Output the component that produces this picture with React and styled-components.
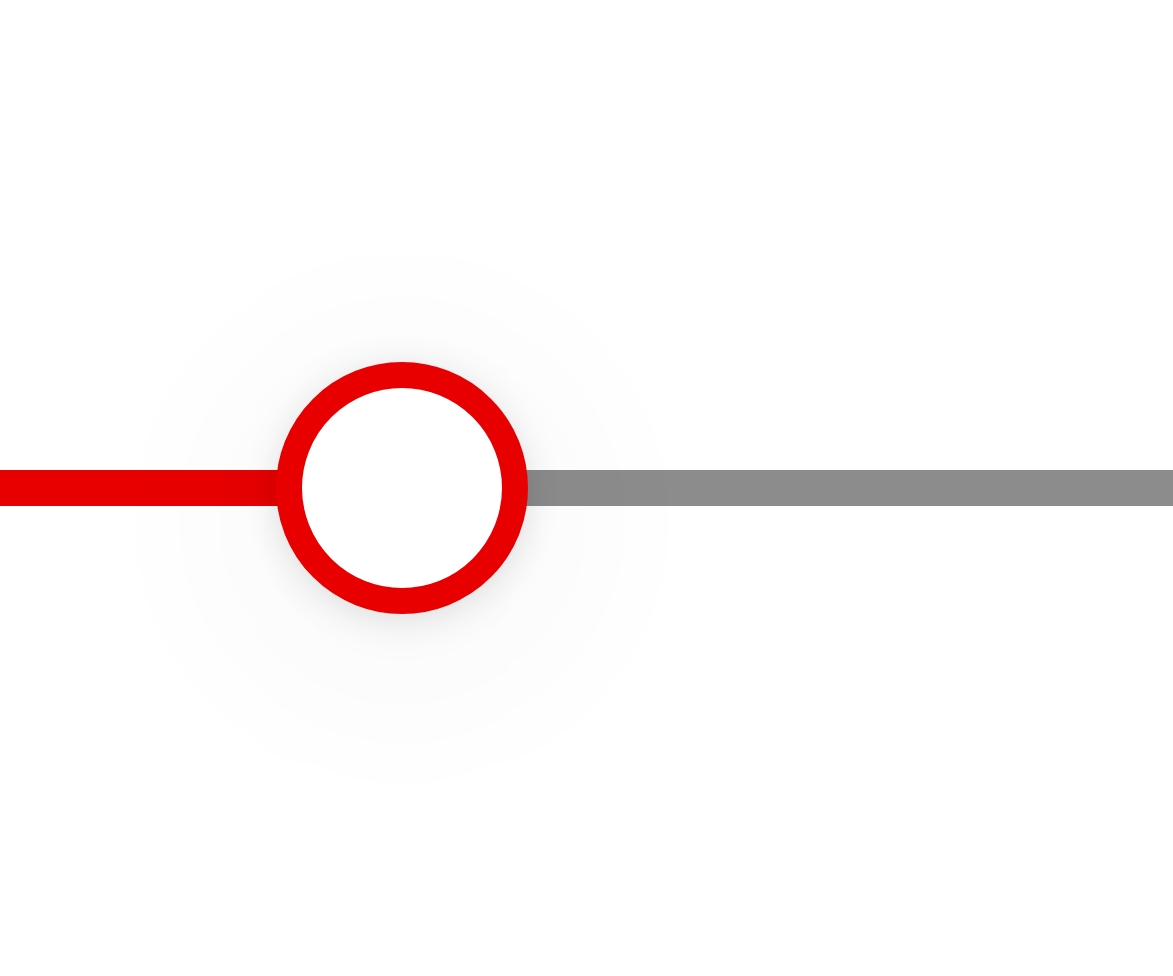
import React from 'react';
import styled, { createGlobalStyle } from 'styled-components';

const GlobalStyle = createGlobalStyle`
  html, body {
    margin: 0;
    padding: 0;
    background: #ffffff;
    font-family: 'Liberation Sans', Arial, sans-serif;
  }
`;

const Page = styled.main`
  display: flex;
  align-items: center;
  height: 976px;
  overflow: hidden;
`;

const Track = styled.div`
  position: relative;
  display: flex;
  width: 100%;
  height: 36px;
`;

const Segment = styled.div`
  flex: ${({ grow }) => grow};
  background: ${({ color }) => color};
`;

const Thumb = styled.div`
  position: absolute;
  top: 50%;
  width: 252px;
  height: 252px;
  box-sizing: border-box;
  border: 26px solid #e80000;
  border-radius: 50%;
  background: #ffffff;
  transform: translate(-50%, -50%);
  box-shadow:
    0 6px 36px rgba(0, 0, 0, 0.12),
    0 32px 150px 90px rgba(0, 0, 0, 0.018);
`;

const App = () => {
  const value = 34.3;

  return (
    <>
      <GlobalStyle />
      <Page>
        <Track role="slider" aria-valuenow={value} aria-valuemin={0} aria-valuemax={100}>
          <Segment grow={value} color="#e80000" />
          <Segment grow={100 - value} color="#8c8c8c" />
          <Thumb style={{ left: `${value}%` }} />
        </Track>
      </Page>
    </>
  );
};

export default App;
